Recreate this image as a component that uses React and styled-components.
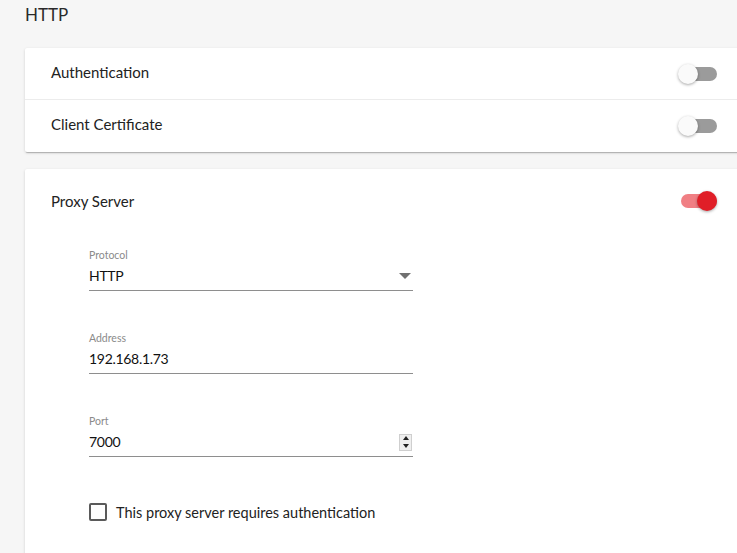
import React from "react";
import styled, { createGlobalStyle } from "styled-components";

const Global = createGlobalStyle`
  html, body { margin: 0; padding: 0; background: #f6f6f6; overflow: hidden; }
  body { font-family: "Lato", "Open Sans", sans-serif; color: #222; }
`;

const Page = styled.div`
  width: 737px;
  height: 553px;
  padding: 0 0 0 25px;
  box-sizing: border-box;
  display: flex;
  flex-direction: column;
`;

const Title = styled.h1`
  margin: 0;
  padding-top: 5px;
  height: 43px;
  font-size: 17px;
  font-weight: 400;
  color: #2a2a2a;
  line-height: 20px;
  flex-shrink: 0;
`;

const Card = styled.section`
  background: #fff;
  width: 740px;
  border-radius: 2px;
  box-shadow: 0 1px 3px rgba(0, 0, 0, 0.16), 0 2px 1px -1px rgba(0, 0, 0, 0.2);
  margin-bottom: ${(p) => p.$mb || 0}px;
  flex-shrink: 0;
`;

const Row = styled.div`
  height: ${(p) => p.$h || 51}px;
  display: flex;
  align-items: center;
  justify-content: space-between;
  padding: 0 48px 0 26px;
  box-sizing: border-box;
  border-top: ${(p) => (p.$divider ? "1px solid #ececec" : "none")};
  font-size: 15px;
  color: #222;
`;

const RowLabel = styled.span`
  margin-bottom: ${(p) => (p.$raise ? 4 : 0)}px;
`;

const Toggle = styled.div`
  position: relative;
  width: 39px;
  height: 20px;
`;

const Track = styled.div`
  position: absolute;
  left: 3px;
  right: 0;
  top: 3px;
  height: 14px;
  border-radius: 7px;
  background: ${(p) => (p.$on ? "#f07f84" : "#9b9b9b")};
`;

const Thumb = styled.div`
  position: absolute;
  top: 0;
  left: ${(p) => (p.$on ? "19px" : "0")};
  width: 20px;
  height: 20px;
  border-radius: 50%;
  background: ${(p) => (p.$on ? "#e01e27" : "#fafafa")};
  box-shadow: 0 1px 3px rgba(0, 0, 0, 0.35);
`;

const Switch = ({ on }) => (
  <Toggle>
    <Track $on={on} />
    <Thumb $on={on} />
  </Toggle>
);

const ProxyBody = styled.div`
  padding: 15px 0 40px 64px;
  display: flex;
  flex-direction: column;
  gap: 40px;
`;

const Field = styled.div`
  width: 324px;
  border-bottom: 1px solid #8e8e8e;
  display: flex;
  flex-direction: column;
  padding-bottom: 4px;
`;

const Label = styled.label`
  font-size: 10.5px;
  color: #8a8a8a;
  line-height: 14px;
  height: 18px;
`;

const ValueRow = styled.div`
  display: flex;
  align-items: center;
  justify-content: space-between;
  font-size: 14px;
  letter-spacing: -0.3px;
  line-height: 20px;
  color: #111;
`;

const Spinner = styled.div`
  width: 13px;
  height: 17px;
  border: 1px solid #cfcfcf;
  background: #efefef;
  display: flex;
  flex-direction: column;
  align-items: center;
  justify-content: space-around;
  box-sizing: border-box;
  margin-right: 1px;
`;

const CheckRow = styled.label`
  display: flex;
  align-items: center;
  gap: 9px;
  font-size: 14.5px;
  color: #222;
  margin-top: 6px;
`;

const Box = styled.span`
  width: 14px;
  height: 14px;
  border: 2px solid #5a5a5a;
  border-radius: 2px;
  flex-shrink: 0;
`;

export default function App() {
  return (
    <>
      <Global />
      <Page>
        <Title>HTTP</Title>
        <Card $mb={17}>
          <Row $h={51}>
            <RowLabel $raise>Authentication</RowLabel>
            <Switch on={false} />
          </Row>
          <Row $h={53} $divider>
            <RowLabel $raise>Client Certificate</RowLabel>
            <Switch on={false} />
          </Row>
        </Card>
        <Card>
          <Row $h={64}>
            <RowLabel>Proxy Server</RowLabel>
            <Switch on />
          </Row>
          <ProxyBody>
            <Field>
              <Label>Protocol</Label>
              <ValueRow>
                HTTP
                <svg width="12" height="6" viewBox="0 0 12 6" style={{ marginRight: 2 }}>
                  <path d="M0 0h12L6 6z" fill="#707070" />
                </svg>
              </ValueRow>
            </Field>
            <Field>
              <Label>Address</Label>
              <ValueRow>192.168.1.73</ValueRow>
            </Field>
            <Field>
              <Label>Port</Label>
              <ValueRow>
                7000
                <Spinner>
                  <svg width="6" height="4" viewBox="0 0 6 4"><path d="M0 4h6L3 0z" fill="#222" /></svg>
                  <svg width="6" height="4" viewBox="0 0 6 4"><path d="M0 0h6L3 4z" fill="#222" /></svg>
                </Spinner>
              </ValueRow>
            </Field>
            <CheckRow>
              <Box />
              This proxy server requires authentication
            </CheckRow>
          </ProxyBody>
        </Card>
      </Page>
    </>
  );
}
